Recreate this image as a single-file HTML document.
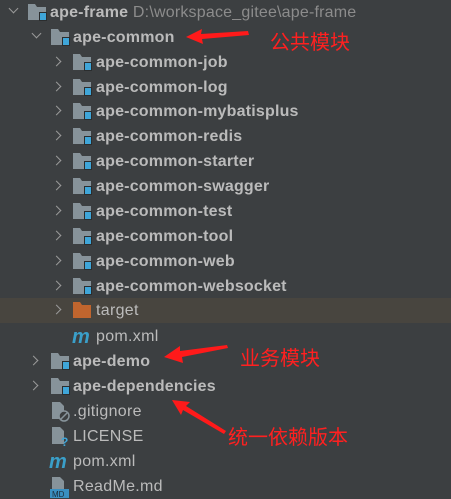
<!DOCTYPE html>
<html><head><meta charset="utf-8"><style>
body{margin:0;width:451px;height:495px;background:#3c3f41;overflow:hidden;position:relative;font-family:"Liberation Sans","Noto Sans CJK SC",sans-serif;}
.r{position:absolute;left:0;width:451px;height:25px;}
.t{position:absolute;top:4px;font-size:16px;letter-spacing:0.3px;color:#bbbbbb;white-space:nowrap;}
.b{font-weight:bold;letter-spacing:0.2px;}
.chev{position:absolute;top:8px;width:6px;height:6px;border-right:1.5px solid #9a9a9a;border-bottom:1.5px solid #9a9a9a;}
.cr{transform:rotate(-45deg);}
.cd{transform:rotate(45deg);top:5px;}
.fold{position:absolute;top:4px;width:19px;height:17px;}
.m{position:absolute;top:2px;font:italic bold 20px "Liberation Sans",sans-serif;color:#3a9fc9;}
.cn{position:absolute;color:#ff2020;font-size:20px;font-family:"Noto Sans CJK SC",sans-serif;}
</style></head><body>
<svg width="0" height="0" style="position:absolute"><defs>
<g id="f"><path d="M0 0H7L9 3H18V16H0Z" fill="#87939a"/><rect x="11.5" y="8.5" width="7" height="8" fill="#3fa6d9" stroke="#2b2d2e"/></g>
</defs></svg>

<div class="r" style="top:0"><div class="chev cd" style="left:10px"></div><svg class="fold" style="left:28px"><use href="#f"/></svg><div class="t b" style="left:50px">ape-frame <span style="font-weight:normal;color:#8c8c8c">D:\workspace_gitee\ape-frame</span></div></div>
<div class="r" style="top:25px"><div class="chev cd" style="left:33px"></div><svg class="fold" style="left:51px"><use href="#f"/></svg><div class="t b" style="left:73px">ape-common</div></div>

<div class="r" style="top:50px"><div class="chev cr" style="left:53px"></div><svg class="fold" style="left:73px"><use href="#f"/></svg><div class="t b" style="left:96px">ape-common-job</div></div>
<div class="r" style="top:75px"><div class="chev cr" style="left:53px"></div><svg class="fold" style="left:73px"><use href="#f"/></svg><div class="t b" style="left:96px">ape-common-log</div></div>
<div class="r" style="top:99px"><div class="chev cr" style="left:53px"></div><svg class="fold" style="left:73px"><use href="#f"/></svg><div class="t b" style="left:96px">ape-common-mybatisplus</div></div>
<div class="r" style="top:124px"><div class="chev cr" style="left:53px"></div><svg class="fold" style="left:73px"><use href="#f"/></svg><div class="t b" style="left:96px">ape-common-redis</div></div>
<div class="r" style="top:149px"><div class="chev cr" style="left:53px"></div><svg class="fold" style="left:73px"><use href="#f"/></svg><div class="t b" style="left:96px">ape-common-starter</div></div>
<div class="r" style="top:174px"><div class="chev cr" style="left:53px"></div><svg class="fold" style="left:73px"><use href="#f"/></svg><div class="t b" style="left:96px">ape-common-swagger</div></div>
<div class="r" style="top:199px"><div class="chev cr" style="left:53px"></div><svg class="fold" style="left:73px"><use href="#f"/></svg><div class="t b" style="left:96px">ape-common-test</div></div>
<div class="r" style="top:224px"><div class="chev cr" style="left:53px"></div><svg class="fold" style="left:73px"><use href="#f"/></svg><div class="t b" style="left:96px">ape-common-tool</div></div>
<div class="r" style="top:249px"><div class="chev cr" style="left:53px"></div><svg class="fold" style="left:73px"><use href="#f"/></svg><div class="t b" style="left:96px">ape-common-web</div></div>
<div class="r" style="top:274px"><div class="chev cr" style="left:53px"></div><svg class="fold" style="left:73px"><use href="#f"/></svg><div class="t b" style="left:96px">ape-common-websocket</div></div>
<div class="r" style="top:298px;background:#48453f"><div class="chev cr" style="left:53px"></div><svg class="fold" style="left:73px"><path d="M0 0H7L9 3H18V16H0Z" fill="#c0652e"/></svg><div class="t" style="left:96px">target</div></div>
<div class="r" style="top:324px"><div class="m" style="left:72px">m</div><div class="t" style="left:96px">pom.xml</div></div>

<div class="r" style="top:349px"><div class="chev cr" style="left:30px"></div><svg class="fold" style="left:51px"><use href="#f"/></svg><div class="t b" style="left:73px">ape-demo</div></div>
<div class="r" style="top:374px"><div class="chev cr" style="left:30px"></div><svg class="fold" style="left:51px"><use href="#f"/></svg><div class="t b" style="left:73px">ape-dependencies</div></div>
<div class="r" style="top:399px"><svg style="position:absolute;left:52px;top:3px" width="20" height="20"><path d="M0 0H8L12 4V17H0Z" fill="#87939a"/><circle cx="12" cy="14" r="5" fill="#3c3f41" stroke="#87939a" stroke-width="1.5"/><path d="M9 17L15 11" stroke="#87939a" stroke-width="1.5"/></svg><div class="t" style="left:73px">.gitignore</div></div>
<div class="r" style="top:424px"><svg style="position:absolute;left:52px;top:3px" width="20" height="20"><path d="M0 0H8L12 4V17H0Z" fill="#87939a"/><text x="9" y="19" font-size="12" font-weight="bold" fill="#3fa6d9" font-family="Liberation Sans">?</text></svg><div class="t" style="left:73px">LICENSE</div></div>
<div class="r" style="top:449px"><div class="m" style="left:49px">m</div><div class="t" style="left:73px">pom.xml</div></div>
<div class="r" style="top:474px"><svg style="position:absolute;left:50px;top:3px" width="20" height="22"><path d="M2 0H10L14 4V12H2Z" fill="#87939a"/><rect x="0" y="12" width="19" height="9" fill="#3a8fc0"/><text x="2" y="20" font-size="8" fill="#1c2b36" font-family="Liberation Sans">MD</text></svg><div class="t" style="left:73px">ReadMe.md</div></div>

<svg style="position:absolute;left:0;top:0" width="451" height="495">
<path d="M186 37L202 29L201 34L248 31L249 35L202 39L203 44Z" fill="#ff1a1a"/>
<path d="M164 357L180 346L180 351L227 345L228 348L182 357L183 363Z" fill="#ff1a1a"/>
<path d="M172 400L190 402L186 406L226 431L224 434L183 410L181 415Z" fill="#ff1a1a"/>
</svg>
<div class="cn" style="left:270px;top:26px">公共模块</div>
<div class="cn" style="left:240px;top:342px">业务模块</div>
<div class="cn" style="left:228px;top:421px">统一依赖版本</div>
</body></html>
